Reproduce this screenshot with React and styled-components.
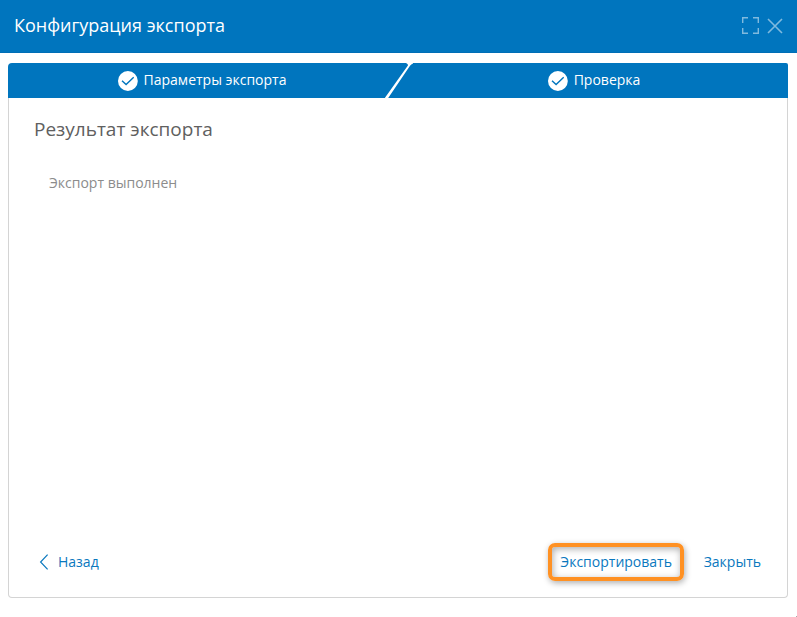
import React from "react";
import styled, { createGlobalStyle } from "styled-components";

const BLUE = "#0075be";

const GlobalStyle = createGlobalStyle`
  * { box-sizing: border-box; }
  body {
    margin: 0;
    background: #fff;
    overflow: hidden;
    font-family: "Open Sans", "Noto Sans", sans-serif;
  }
`;

const Dialog = styled.div`
  position: relative;
  display: flex;
  flex-direction: column;
  width: 797px;
  height: 617px;
`;

const Header = styled.header`
  display: flex;
  align-items: center;
  justify-content: space-between;
  flex: none;
  height: 53px;
  padding: 0 14px 1px 14px;
  background: ${BLUE};
  border-bottom: 1px solid #006eb6;
  color: #fff;
`;

const Title = styled.h1`
  margin: 0 0 2px;
  font-size: 18px;
  line-height: 24px;
  font-weight: 400;
`;

const WindowButtons = styled.div`
  display: flex;
  align-items: center;
  gap: 8px;
  color: #80bade;
  svg { display: block; }
`;

const Wizard = styled.main`
  display: flex;
  flex-direction: column;
  width: 780px;
  height: 535px;
  margin: 10px 0 0 8px;
`;

const Steps = styled.div`
  display: flex;
  flex: none;
  height: 35px;
  border-radius: 4px 2px 0 0;
  background: ${BLUE};
  overflow: hidden;
`;

const Step = styled.div`
  display: flex;
  flex: 1;
  align-items: center;
  justify-content: center;
  gap: 5px;
  padding: ${(p) => (p.$last ? "0 13px 0 0" : "0 0 0 13px")};
  color: #fff;
  font-size: 14px;
  line-height: 20px;
  span { margin-top: -2px; }
`;

const Panel = styled.section`
  display: flex;
  flex-direction: column;
  flex: 1;
  border: 1px solid #d4d4d4;
  border-top: 0;
  border-radius: 0 0 4px 4px;
`;

const Heading = styled.h2`
  margin: 18px 0 0 25px;
  color: #606060;
  font-size: 19px;
  line-height: 26px;
  font-weight: 400;
`;

const Message = styled.p`
  margin: 31px 0 0 40px;
  color: #8c8c8c;
  font-size: 14px;
  line-height: 20px;
`;

const Footer = styled.footer`
  display: flex;
  align-items: center;
  height: 38px;
  margin-top: auto;
  margin-bottom: 16px;
  padding: 0 26px 0 30px;
`;

const LinkButton = styled.button`
  display: flex;
  align-items: center;
  gap: 9px;
  padding: 0;
  border: 0;
  background: none;
  color: #0a78be;
  font: 400 14px/20px "Open Sans", "Noto Sans", sans-serif;
  white-space: nowrap;
`;

const Highlight = styled.div`
  display: flex;
  align-items: center;
  justify-content: center;
  width: 136px;
  height: 38px;
  margin: 0 20px 0 auto;
  padding-left: 1px;
  border: 4px solid #ff9123;
  border-radius: 7px;
  box-shadow: 1px 2px 6px rgba(0, 0, 0, 0.32), inset 1px 2px 7px rgba(0, 0, 0, 0.32);
`;

const ResizeDot = styled.i`
  position: absolute;
  right: 0;
  bottom: 0;
  width: 1px;
  height: 1px;
  background: #aaa;
`;

const CheckIcon = () => (
  <svg width="21" height="20" viewBox="0 0 21 20">
    <circle cx="9.9" cy="10" r="9.9" fill="#fff" />
    <path d="M4 9.7 L8.1 13.6 L15.7 6.3" fill="none" stroke={BLUE} strokeWidth="1.4" />
  </svg>
);

const StepDivider = () => (
  <svg width="30" height="35" viewBox="0 0 30 35">
    <path d="M1.8 35 L24.9 2.5 Q25.4 1 23 0 H32 Q28.6 .4 27 2.8 L5.2 35 Z" fill="#fff" />
  </svg>
);

const ExpandIcon = () => (
  <svg width="17" height="17" viewBox="0 0 17 17" fill="none" stroke="currentColor" strokeWidth="1.4">
    <path d="M.7 6V.7H6M11 .7h5.3V6M16.3 11v5.3H11M6 16.3H.7V11" />
  </svg>
);

const CloseIcon = () => (
  <svg width="16" height="16" viewBox="0 0 16 16" fill="none" stroke="currentColor" strokeWidth="1.6">
    <path d="M1 1l14 14M15 1L1 15" />
  </svg>
);

const BackIcon = () => (
  <svg width="10" height="16" viewBox="0 0 10 16" fill="none" stroke="currentColor" strokeWidth="1.2">
    <path d="M8.6 .6L1.6 8l7 7.4" />
  </svg>
);

export default function App() {
  return (
    <>
      <GlobalStyle />
      <Dialog>
        <Header>
          <Title>Конфигурация экспорта</Title>
          <WindowButtons>
            <ExpandIcon />
            <CloseIcon />
          </WindowButtons>
        </Header>
        <Wizard>
          <Steps>
            <Step>
              <CheckIcon />
              <span>Параметры экспорта</span>
            </Step>
            <StepDivider />
            <Step $last>
              <CheckIcon />
              <span>Проверка</span>
            </Step>
          </Steps>
          <Panel>
            <Heading>Результат экспорта</Heading>
            <Message>Экспорт выполнен</Message>
            <Footer>
              <LinkButton>
                <BackIcon />
                Назад
              </LinkButton>
              <Highlight>
                <LinkButton>Экспортировать</LinkButton>
              </Highlight>
              <LinkButton>Закрыть</LinkButton>
            </Footer>
          </Panel>
        </Wizard>
        <ResizeDot />
      </Dialog>
    </>
  );
}
